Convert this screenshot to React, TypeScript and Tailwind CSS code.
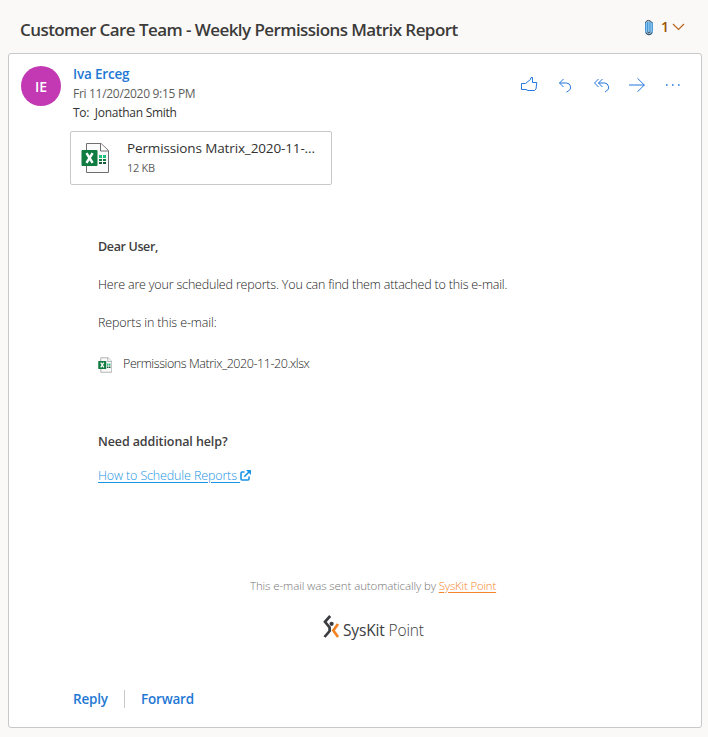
import React from "react";

function ExcelIcon({ className }: { className: string }) {
  return (
    <svg viewBox="0 0 28 32" className={className} fill="none">
      <path d="M5.5 1.5H20L27.5 8.5V30.5H5.5Z" fill="#fafafb" stroke="#6f6f6f" strokeLinejoin="round" />
      <path d="M19.5 1.5V9H27" fill="#fff" stroke="#6f6f6f" />
      <path d="M18 13h3v3h-3zM22 13h3v3h-3z" fill="#21c17c" />
      <path d="M18 17h3v2h-3zM22 17h3v2h-3z" fill="#107c41" />
      <path d="M18 20h3v2h-3zM22 20h3v2h-3z" fill="#185c37" />
      <rect x="0.5" y="8" width="16" height="16" rx="1" fill="#107c41" />
      <path d="M5.5 11.2L11.6 20.8M11.6 11.2L5.5 20.8" stroke="#fff" strokeWidth="2.5" />
    </svg>
  );
}

function Paperclip() {
  return (
    <svg viewBox="0 0 10 18" className="h-[18px] w-[10px]" fill="none">
      <rect x="1.2" y="3" width="7.6" height="13" rx="3.5" fill="#8cc4ee" />
      <path d="M1.5 4V13.5a3.3 3.3 0 0 0 6.9 0V4M3.6 4V13.5M6 4V13.5" stroke="#4596d6" />
      <path d="M1.5 4.5a3.2 3.2 0 0 1 6 0M2 14.5a3.2 3.2 0 0 0 6 0M3.6 13.5a1.2 1.2 0 0 0 2.5 0" stroke="#4a4a4a" />
    </svg>
  );
}

function Actions() {
  return (
    <div className="flex h-[18px] items-center text-[#2377de]">
      <svg viewBox="0 0 18 18" className="mr-[19px] h-[18px] w-[18px]" fill="none" stroke="currentColor">
        <path d="M1.5 7.5H5.5L10.5 3.5L11 1.5H12.5V6.5H16.8L16 13L14.5 14.5H8L6 13.5H1.5Z" />
      </svg>
      <svg viewBox="0 0 18 18" className="mr-[18px] h-[18px] w-[18px]" fill="none" stroke="currentColor">
        <path d="M6.5 3L2.5 7L6.5 11M2.5 7H9.5a4.3 4.3 0 0 1 2 8L9.5 16" />
      </svg>
      <svg viewBox="0 0 18 18" className="mr-[17px] h-[18px] w-[18px]" fill="none" stroke="currentColor">
        <path d="M5.5 3L1.5 7L5.5 11M9.5 3L5.5 7L9.5 11M5.5 7H11.5a4.3 4.3 0 0 1 2 8L12 16" />
      </svg>
      <svg viewBox="0 0 18 18" className="mr-[20px] h-[18px] w-[18px]" fill="none" stroke="currentColor">
        <path d="M1 9H16.5M9.5 2.3L16.3 9L9.5 15.8" />
      </svg>
      <svg viewBox="0 0 16 18" className="h-[18px] w-[16px]" fill="currentColor">
        <path d="M0 8.2h1.6v1.6H0zM6 8.2h1.6v1.6H6zM12 8.2h1.6v1.6h-1.6z" />
      </svg>
    </div>
  );
}

export default function App() {
  return (
    <div className="flex h-[737px] w-[708px] flex-col overflow-hidden bg-[#faf9f8] px-2 font-['Open_Sans',sans-serif] whitespace-nowrap text-[#323130]">
      <header className="flex h-[53px] items-start pl-3">
        <h1 className="mt-[18px] text-[17px] leading-6 font-semibold tracking-[-0.57px] text-[#3c3b3a]">Customer Care Team - Weekly Permissions Matrix Report</h1>
        <div className="mt-[18px] mr-[15px] ml-auto flex h-[18px] items-center">
          <Paperclip />
          <span className="ml-[7px] text-[14px] leading-[18px] font-semibold tracking-[-1px] text-[#9a5200]">1</span>
          <svg viewBox="0 0 13 8" className="ml-[4px] h-[8px] w-[13px]" fill="none" stroke="#b5651d" strokeWidth="1.2">
            <path d="M1 1L6.5 6.5L12 1" />
          </svg>
        </div>
      </header>
      <main className="flex h-[675px] w-[694px] flex-col rounded-[3px] border border-[#c8c8c8] bg-white">
        <section className="flex h-[77px] pt-3 pl-3">
          <div className="flex h-10 w-10 items-center justify-center rounded-full bg-[#c239b3] text-[14px] font-semibold text-white">IE</div>
          <div className="ml-3 flex flex-col">
            <span className="h-[19px] text-[13.5px] leading-[17px] font-semibold tracking-[-0.18px] text-[#1f78d4]">Iva Erceg</span>
            <span className="h-[19px] text-[12px] leading-[17px] tracking-[-0.3px] text-[#605e5c]">Fri 11/20/2020 9:15 PM</span>
            <span className="text-[12px] leading-[17px] tracking-[-0.27px]">To:&nbsp; Jonathan Smith</span>
          </div>
          <div className="mt-[10px] mr-[19px] ml-auto"><Actions /></div>
        </section>
        <section className="ml-[61px] flex h-[54px] w-[262px] rounded-[2px] border border-[#c8c8c8] pt-[10px] pl-[10px]">
          <ExcelIcon className="h-8 w-7" />
          <div className="ml-[18px] flex flex-col">
            <span className="-mt-[3px] h-[20px] text-[13.5px] leading-[18px] tracking-[-0.13px]">Permissions Matrix_2020-11-...</span>
            <span className="text-[11px] leading-[17px] tracking-[-0.3px] text-[#605e5c]">12 KB</span>
          </div>
        </section>
        <section className="mt-[53px] flex h-[332px] flex-col items-start pl-[89px] text-[12.5px] leading-[18px] font-light text-[#222]">
          <p className="font-semibold tracking-[-0.36px] text-[#404040]">Dear User,</p>
          <p className="mt-5 tracking-[-0.18px]">Here are your scheduled reports. You can find them attached to this e-mail.</p>
          <p className="mt-5 tracking-[-0.12px]">Reports in this e-mail:</p>
          <div className="mt-[23px] flex items-center">
            <ExcelIcon className="mt-[2px] h-4 w-[14px]" />
            <span className="ml-[11px] tracking-[-0.43px]">Permissions Matrix_2020-11-20.xlsx</span>
          </div>
          <p className="mt-[60px] text-[12.5px] font-semibold tracking-[-0.1px] text-[#404040]">Need additional help?</p>
          <a className="mt-4 flex items-center text-[#1a94e4]">
            <span className="tracking-[-0.14px] underline underline-offset-2">How to Schedule Reports&nbsp;</span>
            <svg viewBox="0 0 11 11" className="-mt-px h-[11px] w-[11px]" fill="none" stroke="currentColor" strokeWidth="1.6">
              <path d="M4.5 2H2.2Q1 2 1 3.2V9Q1 10 2 10H8Q9 10 9 9V6.5M4.2 6.8L9.5 1.5" />
              <path d="M6 0H11V5Z" fill="currentColor" stroke="none" />
            </svg>
          </a>
        </section>
        <footer className="flex h-[104px] flex-col pt-[7px]">
          <p className="ml-[241px] text-[11.5px] leading-[18px] font-light tracking-[-0.1px] text-[#777]">
            This e-mail was sent automatically by <a className="tracking-[-0.2px] text-[#f5842b] underline underline-offset-2">SysKit Point</a>
          </p>
          <div className="mt-[20px] ml-[313px] flex h-6 items-center">
            <svg viewBox="0 0 18 24" className="h-6 w-[18px]" fill="none">
              <path d="M8.2 1L3 6.8L7.6 12.5V16L2.5 22" stroke="#3a3c40" strokeWidth="2.7" />
              <circle cx="9.6" cy="8.8" r="2.1" fill="#3a3c40" />
              <path d="M16 9L11.3 15.5L16 22" stroke="#f58220" strokeWidth="2.7" />
            </svg>
            <span className="mt-[5px] ml-[3px] text-[15.5px] leading-5 tracking-[-0.15px] text-[#3a3c40]">SysKit <span className="font-light">Point</span></span>
          </div>
        </footer>
        <nav className="mt-[16px] flex h-[18px] items-center pl-[64px] text-[13.5px] leading-[18px] font-semibold tracking-[-0.2px] text-[#1f78d4]">
          <span className="w-[51px]">Reply</span>
          <span className="mr-4 h-[18px] w-px bg-[#c8c8c8]" />
          <span>Forward</span>
        </nav>
      </main>
    </div>
  );
}
